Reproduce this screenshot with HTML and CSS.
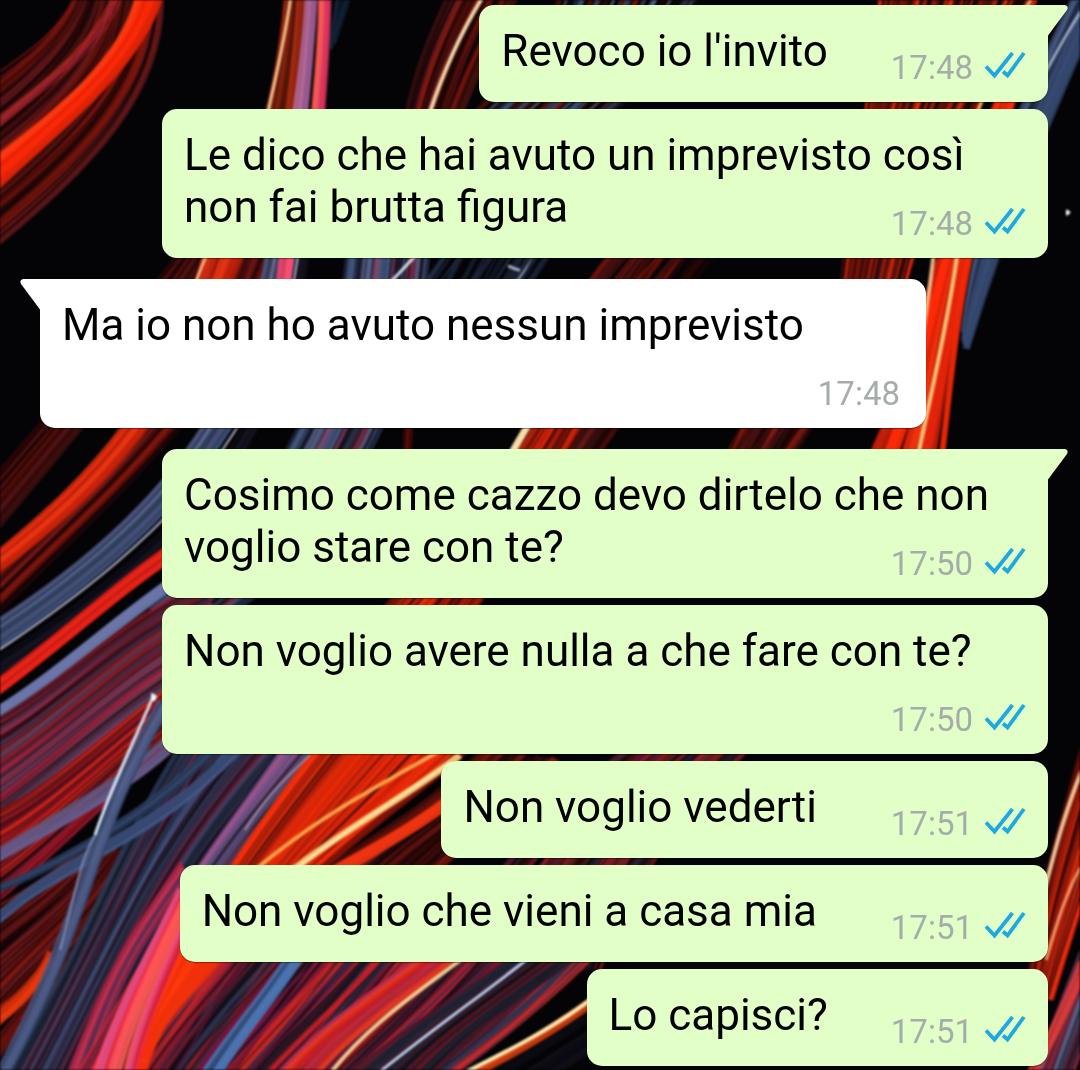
FILE: index.html
```html
<!DOCTYPE html>
<html lang="it">
<head>
  <meta charset="UTF-8">
  <meta name="viewport" content="width=device-width, initial-scale=1.0">
  <title>Chat</title>
  <link rel="stylesheet" href="styles.css">
</head>
<body>
  <!-- Wallpaper, filled in by wallpaper.js -->
  <svg class="wallpaper" id="wallpaper" viewBox="0 0 1080 1070" preserveAspectRatio="xMidYMid slice" aria-hidden="true"></svg>

  <!-- Shared shapes -->
  <svg class="sprite" aria-hidden="true">
    <symbol id="ticks" viewBox="0 0 42 28">
      <path d="M2 15.500l8.500 9L28.500 2M19 20.500l4.500 4L40 2" fill="none" stroke="#1fa8e0" stroke-width="3.800"/>
    </symbol>
    <symbol id="tail" viewBox="0 0 20 31">
      <path d="M0 0H17Q21 1 19 5L0 30.500Z" fill="currentColor"/>
    </symbol>
  </svg>

  <main class="chat">
    <div class="message sent first">
      <svg class="tail"><use href="#tail"/></svg>
      <p class="text">Revoco io l'invito<span class="meta"><time>17:48</time><svg class="ticks" role="img" aria-label="Letto"><use href="#ticks"/></svg></span></p>
    </div>
    <div class="message sent">
      <p class="text">Le dico che hai avuto un imprevisto così non fai brutta figura<span class="meta"><time>17:48</time><svg class="ticks" role="img" aria-label="Letto"><use href="#ticks"/></svg></span></p>
    </div>

    <div class="message received first">
      <svg class="tail"><use href="#tail"/></svg>
      <p class="text">Ma io non ho avuto nessun imprevisto<span class="meta"><time>17:48</time></span></p>
    </div>

    <div class="message sent first">
      <svg class="tail"><use href="#tail"/></svg>
      <p class="text">Cosimo come cazzo devo dirtelo che non voglio stare con te?<span class="meta"><time>17:50</time><svg class="ticks" role="img" aria-label="Letto"><use href="#ticks"/></svg></span></p>
    </div>
    <div class="message sent">
      <p class="text">Non voglio avere nulla a che fare con te?<span class="meta"><time>17:50</time><svg class="ticks" role="img" aria-label="Letto"><use href="#ticks"/></svg></span></p>
    </div>
    <div class="message sent">
      <p class="text">Non voglio vederti&nbsp;<span class="meta"><time>17:51</time><svg class="ticks" role="img" aria-label="Letto"><use href="#ticks"/></svg></span></p>
    </div>
    <div class="message sent">
      <p class="text">Non voglio che vieni a casa mia&nbsp;<span class="meta"><time>17:51</time><svg class="ticks" role="img" aria-label="Letto"><use href="#ticks"/></svg></span></p>
    </div>
    <div class="message sent">
      <p class="text">Lo capisci?<span class="meta"><time>17:51</time><svg class="ticks" role="img" aria-label="Letto"><use href="#ticks"/></svg></span></p>
    </div>
  </main>

  <script src="wallpaper.js"></script>
</body>
</html>
```

FILE: styles.css
```css
* {
  box-sizing: border-box;
}

body {
  margin: 0;
  min-height: 100vh;
  background-color: #040407;
  font-family: Roboto, sans-serif;
  color: #000;
}

.wallpaper {
  position: fixed;
  top: 0;
  left: 0;
  width: 100%;
  height: 100%;
  z-index: -1;
  filter: blur(1px);
}

.sprite {
  display: none;
}

.chat {
  display: flex;
  flex-direction: column;
  gap: 7px;
  padding: 5px 32px 4px 40px;
}

/* Bubbles */
.message {
  position: relative;
  max-width: calc(100% - 122px);
  padding: 20px 22px 8px;
  border-radius: 15px;
  box-shadow: 0 1px 1px rgba(0, 0, 0, 0.4);
}

.sent {
  align-self: flex-end;
  background-color: #e1ffc7;
  color: #000;
}

.received {
  align-self: flex-start;
  background-color: #fff;
}

.sent + .received,
.received + .sent {
  margin-top: 14px;
}

.sent.first {
  border-top-right-radius: 0;
}

.received.first {
  border-top-left-radius: 0;
}

.tail {
  position: absolute;
  top: 0;
  left: 100%;
  width: 20px;
  height: 31px;
  color: #e1ffc7;
}

.received .tail {
  left: auto;
  right: 100%;
  color: #fff;
  transform: scaleX(-1);
}

.text {
  display: flow-root;
  margin: 0;
  font-size: 44px;
  line-height: 52px;
}

/* Time and ticks share the last line when there is room for them */
.meta {
  float: right;
  display: flex;
  align-items: center;
  gap: 11px;
  margin: 17px 0 0 63px;
  font-size: 33px;
  color: #a5adab;
}

.received .meta {
  margin-right: 4px;
}

.ticks {
  width: 42px;
  height: 28px;
  margin-bottom: 6px;
}
```

FILE: wallpaper.js
```js
const svg = document.getElementById('wallpaper');
let seed = 11;

// Seeded, so the strands are the same on every load
function random() {
  seed = (seed * 16807) % 2147483647;
  return seed / 2147483647;
}

function addStrand(p, color, width, opacity) {
  const path = document.createElementNS('http://www.w3.org/2000/svg', 'path');
  path.setAttribute('d', `M${p[0]} ${p[1]}C${p.slice(2).join(' ')}`);
  path.setAttribute('fill', 'none');
  path.setAttribute('stroke', color);
  path.setAttribute('stroke-width', width);
  path.setAttribute('opacity', opacity);
  svg.appendChild(path);
}

// Point list between two edge curves, t from 0 to 1
function between(from, to, t, skew) {
  return from.map((v, k) => Math.round(v + (to[k] - v) * (t + (k > 3 ? skew : 0))));
}

// Strands spread between two edge curves, with thin dark ones over them
function addBundle(from, to, count, width, colors) {
  for (let i = 0; i < count; i++) {
    const t = (i + random() * 0.8) / count;
    const skew = (random() - 0.5) * 0.06;
    const color = colors[Math.floor(random() * colors.length)];
    addStrand(between(from, to, t, skew), color, (width * (0.5 + random())).toFixed(1), (0.7 + random() * 0.3).toFixed(2));
  }
  if (count < 12) {
    return;
  }
  for (let i = 0; i < count; i++) {
    const skew = (random() - 0.5) * 0.1;
    const p = between(from, to, random(), skew);
    if (random() < 0.4) {
      addStrand(p, '#0c060c', (1 + random() * 2).toFixed(1), (0.3 + random() * 0.4).toFixed(2));
    } else {
      addStrand(p, colors[i % colors.length], 1.5, 0.9);
    }
  }
}

const darkRed = ['#5c1009', '#2a0606', '#8a160c', '#43100f', '#1a0505', '#6e1a1c'];
const red = ['#e02408', '#ff2d0a', '#b81c0a', '#7a1208', '#f0320f', '#3a0806'];
const blue = ['#3d5078', '#2a3a58', '#56688f', '#1c2438', '#141a28', '#6a6f9a'];
const purple = ['#6a3350', '#a3284a', '#4a3550', '#c4264a', '#5a4560', '#7e1c30', '#33283c', '#8a1a20'];
const mixed = ['#c4202a', '#5a1830', '#2c3450', '#8a1c28', '#1c1420', '#d02a24', '#3a2a44', '#7a1440'];
const pink = ['#ff4a72', '#e83a6a', '#ff5a50', '#d84a80', '#f02a40'];

// Top left
addBundle([75, -5, 60, 30, 25, 60, -5, 82], [162, -5, 165, 95, 90, 170, -5, 248], 40, 6, darkRed);
addBundle([112, -5, 90, 50, 30, 90, -5, 120], [124, -5, 100, 60, 40, 90, -5, 132], 5, 2, ['#a0203a', '#c83028']);
addBundle([138, -5, 125, 60, 60, 110, -5, 160], [162, -5, 140, 65, 70, 120, -5, 190], 9, 6, ['#ff2a08', '#f02406', '#e02206', '#ff3a12']);

// Top centre
addBundle([284, -5, 280, 40, 274, 80, 255, 150], [304, -5, 302, 40, 298, 80, 290, 150], 9, 5, ['#a82a0c', '#6a1a0c', '#c8300c', '#8a2414']);
addBundle([308, -5, 306, 40, 300, 80, 290, 150], [316, -5, 314, 40, 310, 80, 305, 150], 4, 6, ['#b06aa0', '#94588c', '#c070a0']);
addBundle([319, -5, 320, 40, 314, 80, 308, 150], [330, -5, 330, 40, 326, 80, 322, 150], 6, 5, pink);
addStrand([291, -5, 285, 40, 276, 75, 268, 112], '#ffd9a0', 3, 0.9);
addBundle([336, -5, 334, 10, 332, 25, 330, 50], [352, -5, 348, 10, 342, 20, 336, 40], 5, 3, ['#1a2c44', '#101c30']);
addBundle([446, -5, 430, 30, 412, 70, 404, 120], [520, -5, 500, 30, 480, 70, 460, 120], 20, 5, darkRed);
addStrand([484, -5, 462, 30, 444, 70, 430, 112], '#ffe0b0', 4, 0.95);
addBundle([560, -5, 540, 60, 500, 90, 470, 120], [700, -5, 660, 60, 640, 90, 600, 120], 18, 4, blue.concat(darkRed));

// Middle, running down to the left edge
addBundle([190, 240, 120, 330, 60, 400, -10, 480], [215, 240, 160, 340, 90, 420, -10, 540], 14, 6, darkRed);
addBundle([200, 240, 190, 400, 80, 480, -10, 570], [300, 240, 230, 400, 110, 500, -10, 620], 30, 6, darkRed);
addBundle([208, 240, 170, 390, 100, 470, -10, 558], [250, 240, 180, 410, 110, 490, -10, 578], 9, 6, ['#f0280a', '#d0240a', '#b81c0a', '#e83412']);
addStrand([210, 245, 205, 260, 200, 270, 195, 285], '#ffc890', 3, 0.9);
addBundle([270, 240, 250, 400, 160, 520, -10, 628], [300, 240, 275, 420, 175, 530, -10, 655], 11, 5, ['#3d5078', '#56688f', '#4a5278', '#2a3a58', '#6a6f9a']);
addBundle([300, 250, 280, 420, 200, 530, -10, 664], [310, 250, 290, 430, 210, 550, -10, 684], 8, 4, ['#14101c', '#1c1828', '#0a0a12']);
addStrand([300, 240, 280, 420, 180, 530, -10, 656], '#c8c8e0', 2, 0.9);
addBundle([285, 240, 282, 250, 280, 265, 278, 285], [298, 240, 294, 250, 292, 265, 290, 285], 4, 4, pink);
addBundle([350, 240, 340, 400, 250, 540, 150, 610], [430, 240, 420, 400, 330, 560, 190, 640], 26, 6, blue.concat(['#7a3050', '#a02838']));
addStrand([420, 250, 412, 260, 400, 272, 388, 285], '#e6f0ff', 3, 0.9);
addStrand([540, 250, 530, 262, 522, 272, 514, 285], '#cfdcf0', 3, 0.9);
addBundle([450, 240, 440, 260, 430, 275, 420, 290], [560, 240, 550, 260, 540, 275, 530, 290], 12, 4, ['#1c2438', '#26324c', '#101624']);
addBundle([620, 240, 600, 262, 590, 275, 580, 290], [730, 240, 715, 262, 705, 275, 695, 290], 14, 6, darkRed);
addBundle([405, 420, 404, 435, 404, 445, 403, 460], [414, 420, 414, 435, 413, 445, 412, 460], 3, 5, red);
addBundle([535, 415, 520, 450, 400, 600, 300, 700], [590, 415, 570, 450, 500, 600, 400, 700], 22, 6, red);
addStrand([530, 422, 522, 435, 516, 445, 508, 460], '#ffe9b0', 7, 0.95);
addBundle([590, 415, 580, 430, 570, 445, 560, 460], [630, 415, 620, 430, 610, 445, 600, 460], 8, 4, darkRed);
addBundle([745, 415, 735, 430, 730, 445, 720, 460], [820, 415, 810, 430, 800, 445, 790, 460], 16, 6, darkRed.concat(['#a01c0a']));

// Right side
addBundle([880, -5, 870, 100, 850, 200, 840, 290], [1040, -5, 985, 100, 925, 200, 905, 290], 34, 5, red.concat(darkRed));
addStrand([1034, -5, 1010, 30, 985, 90, 975, 120], '#ffc080', 3, 0.9);
addBundle([1018, 60, 930, 240, 930, 330, 870, 455], [1030, 50, 960, 250, 958, 330, 944, 455], 11, 9, ['#ff2a08', '#e8240a', '#c41e0a', '#f0300c', '#a81c08']);
addStrand([934, 250, 930, 290, 926, 310, 922, 340], '#ffc890', 4, 0.9);
addStrand([958, 250, 948, 320, 932, 390, 918, 455], '#ffcf80', 4, 0.95);
addBundle([1074, -5, 1030, 90, 985, 160, 964, 330], [1094, 20, 1060, 100, 1014, 200, 966, 350], 11, 6, ['#3d5078', '#2a3a58', '#4a5c84', '#1c2438', '#34466c']);
addStrand([1082, 10, 1068, 30, 1058, 50, 1044, 75], '#b8c8e8', 3, 0.8);

// Left edge, under the blue band
addBundle([190, 530, 120, 575, 60, 635, -10, 684], [190, 548, 120, 592, 60, 650, -10, 700], 9, 5, ['#f02414', '#d81c18', '#e83010', '#b01820']);
addBundle([190, 565, 120, 610, 60, 670, -10, 712], [190, 575, 120, 620, 60, 680, -10, 720], 5, 5, ['#6a78ac', '#5a6490', '#7a7ab0']);
addBundle([200, 585, 120, 620, 60, 690, -10, 725], [240, 650, 140, 700, 60, 780, -10, 835], 44, 6, purple);
addBundle([240, 640, 150, 690, 60, 790, -10, 815], [260, 670, 170, 730, 60, 850, -10, 905], 34, 7, ['#c41c14', '#7a1014', '#4a0c10', '#a81a30', '#5a1a2c', '#e02a14']);

// Lower left
addBundle([90, 840, 50, 880, 20, 890, -10, 910], [150, 860, 90, 960, 30, 1010, -10, 1070], 34, 6, darkRed);
addBundle([50, 950, 40, 975, 20, 995, -10, 1015], [50, 960, 40, 985, 20, 1010, -10, 1030], 4, 5, ['#c8280a', '#e83a0c']);
addBundle([200, 720, 120, 840, 100, 920, 5, 1085], [370, 720, 220, 850, 180, 920, 110, 1085], 70, 6, ['#22304a', '#2c3c5a', '#1a2230', '#3a3050', '#5a2444', '#1c3040', '#44507a', '#8a2444']);
addBundle([180, 860, 130, 930, 110, 960, 60, 1085], [190, 880, 150, 940, 120, 970, 90, 1085], 8, 3, ['#a82444', '#c43050', '#6a2a50']);
addBundle([200, 700, 150, 770, 60, 810, -10, 855], [210, 710, 160, 780, 60, 825, -10, 866], 5, 4, ['#56608c', '#6a5a8c']);
addBundle([235, 720, 170, 800, 60, 860, -10, 890], [245, 720, 180, 810, 60, 870, -10, 896], 5, 4, ['#34486e', '#243450']);
addBundle([250, 730, 150, 840, 60, 850, -10, 922], [260, 730, 160, 850, 60, 862, -10, 932], 6, 4, ['#44598a', '#34466c', '#3c4c78']);
addBundle([160, 700, 80, 830, 90, 900, -5, 1075], [170, 710, 94, 840, 100, 910, 10, 1075], 7, 4, ['#4a5a84', '#5a6894', '#34446a']);
addStrand([153, 697, 130, 750, 110, 790, 95, 835], '#dcefff', 3, 0.95);
addStrand([95, 835, 80, 860, 76, 890, 60, 950], '#8c98c0', 2, 0.8);

// Pink and orange sweep
addBundle([300, 740, 200, 850, 150, 950, 70, 1085], [320, 740, 230, 850, 170, 930, 100, 1085], 9, 5, ['#c82840', '#7a2038', '#e02c30']);
addBundle([285, 740, 230, 820, 205, 850, 175, 900], [322, 740, 260, 810, 225, 850, 195, 900], 12, 6, ['#7a5a94', '#5a5a8c', '#c04a80', '#4a4a74']);
addBundle([325, 740, 230, 860, 170, 960, 160, 1020], [480, 735, 430, 790, 300, 860, 240, 960], 40, 9, ['#e02408', '#ff2d0a', '#b81c0a', '#7a1208', '#f0320f', '#e82c08', '#d82606']);
addBundle([480, 750, 420, 820, 340, 850, 320, 880], [560, 760, 520, 800, 480, 830, 430, 880], 24, 6, darkRed);
addBundle([480, 770, 420, 820, 380, 840, 330, 868], [490, 775, 430, 825, 390, 845, 350, 870], 4, 5, ['#d82c0a', '#f03410']);
addStrand([310, 755, 290, 775, 270, 790, 245, 830], '#c8a0a8', 2, 0.7);
addStrand([450, 745, 380, 785, 320, 815, 255, 870], '#ffb050', 4, 0.9);
addStrand([460, 755, 410, 795, 350, 825, 290, 872], '#ffd078', 7, 0.9);
addStrand([450, 762, 410, 793, 350, 825, 292, 872], '#fff4c8', 2, 0.95);

// Slivers between the lower bubbles
addBundle([640, 740, 560, 800, 500, 860, 440, 970], [760, 740, 700, 800, 640, 860, 600, 970], 24, 6, mixed.concat(darkRed));

// Bottom strip
addBundle([230, 940, 200, 980, 160, 1030, 130, 1085], [660, 880, 600, 960, 520, 1030, 440, 1085], 100, 6, mixed);
addBundle([300, 940, 270, 990, 230, 1030, 195, 1085], [312, 940, 282, 990, 245, 1030, 212, 1085], 4, 6, ['#4a74b0', '#2c4a74']);
addBundle([440, 940, 360, 1000, 310, 1030, 265, 1085], [480, 940, 420, 990, 350, 1030, 310, 1085], 10, 5, ['#d82818', '#c81c24', '#e83a24', '#b82a50']);
addBundle([520, 950, 470, 990, 400, 1030, 340, 1085], [590, 950, 540, 990, 470, 1030, 430, 1085], 16, 5, ['#1c2434', '#14202c', '#4a1420', '#0c0c14', '#6a1424']);
addBundle([190, 930, 165, 990, 150, 1020, 135, 1085], [235, 930, 215, 980, 165, 1000, 145, 1060], 10, 8, ['#ff3a0a', '#f0300a']);
addBundle([180, 890, 145, 960, 110, 1020, 92, 1085], [205, 890, 180, 950, 145, 1020, 135, 1085], 11, 6, pink);
addStrand([480, 945, 430, 985, 370, 1020, 325, 1080], '#ffdf9c', 4, 0.9);
addStrand([545, 945, 490, 990, 430, 1030, 370, 1080], '#d4e0ff', 3, 0.9);
addBundle([640, 985, 590, 1010, 520, 1060, 480, 1085], [700, 1000, 660, 1020, 600, 1060, 560, 1085], 10, 14, ['#050508', '#0a0a12', '#141018']);
addBundle([620, 975, 570, 1015, 520, 1045, 450, 1082], [625, 982, 575, 1022, 525, 1052, 460, 1084], 4, 5, ['#ff7a30', '#e8501c', '#c8380c']);
addStrand([600, 992, 560, 1025, 510, 1050, 450, 1080], '#fff0b8', 4, 0.95);

// Bottom right
addBundle([1085, 740, 1070, 800, 1045, 860, 1030, 980], [1095, 850, 1085, 900, 1070, 940, 1050, 1000], 18, 7, red);
addStrand([1084, 765, 1065, 810, 1055, 850, 1042, 900], '#ffd8a8', 4, 0.9);
addStrand([1084, 862, 1072, 880, 1060, 910, 1046, 960], '#ffb880', 3, 0.8);
addBundle([1085, 940, 1065, 990, 1050, 1030, 1030, 1085], [1095, 1010, 1090, 1030, 1080, 1060, 1070, 1085], 14, 6, purple.concat(blue));
addBundle([1080, 960, 1060, 1010, 1045, 1040, 1020, 1085], [1085, 970, 1066, 1015, 1052, 1045, 1030, 1085], 3, 5, ['#ff5a40', '#e03a3a']);

// Stray glints
addStrand([1066, 212, 1067, 212, 1068, 213, 1069, 214], '#fff', 5, 1);
addStrand([151, 696, 153, 696, 154, 698, 156, 699], '#fff', 6, 0.9);
addStrand([508, 266, 512, 267, 516, 270, 520, 270], '#c8d4e8', 3, 0.8);
```
